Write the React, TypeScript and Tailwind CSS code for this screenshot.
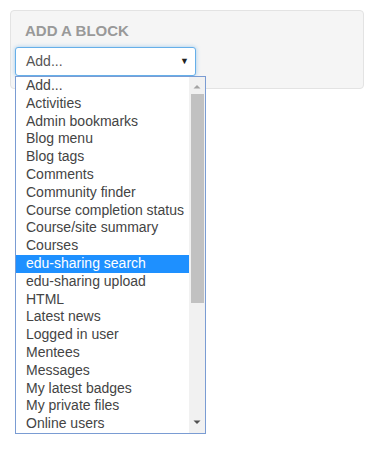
import React from "react";

const items = [
  "Add...",
  "Activities",
  "Admin bookmarks",
  "Blog menu",
  "Blog tags",
  "Comments",
  "Community finder",
  "Course completion status",
  "Course/site summary",
  "Courses",
  "edu-sharing search",
  "edu-sharing upload",
  "HTML",
  "Latest news",
  "Logged in user",
  "Mentees",
  "Messages",
  "My latest badges",
  "My private files",
  "Online users",
];

export default function App() {
  return (
    <div
      className="w-[373px] h-[459px] bg-white pt-[10px] pl-[10px]"
      style={{ fontFamily: '"Liberation Sans", Arial, sans-serif' }}
    >
      <div className="relative w-[354px] h-[79px] rounded-[4px] border border-[#e3e3e3] bg-[#f5f5f5] px-[4px]">
        <h2 className="pl-[10px] pt-[11px] text-[15px] leading-[18px] font-bold text-[#999999]">
          ADD A BLOCK
        </h2>
        {/* select box */}
        <div className="mt-[7px] flex h-[29px] w-[181px] items-center justify-between rounded-[3px] border border-[#66afe9] bg-white pl-[10px] pr-[6px] text-[14px] text-[#555555] shadow-[0_0_4px_rgba(102,175,233,0.6)]">
          <span>Add...</span>
          <span className="text-[9px] text-[#222]">▼</span>
        </div>

        {/* open list */}
        <div className="absolute left-[4px] top-[65px] flex h-[358px] w-[191px] overflow-hidden border border-[#7a9cd3] bg-white">
          <ul className="flex-1 text-[14px] text-[#444444]">
            {items.map((it) => (
              <li
                key={it}
                className={
                  it === "edu-sharing search"
                    ? "h-[17.8px] pl-[10px] leading-[17.8px] bg-[#1e90ff] text-white whitespace-nowrap"
                    : "h-[17.8px] pl-[10px] leading-[17.8px] whitespace-nowrap"
                }
              >
                {it}
              </li>
            ))}
          </ul>
          {/* scrollbar */}
          <div className="relative w-[16px] shrink-0 bg-[#f1f1f1]">
            <svg className="absolute left-[4px] top-[7px]" width="8" height="5" viewBox="0 0 8 5">
              <path d="M0.5 4.5 L4 1 L7.5 4.5 Z" fill="#a3a3a3" />
            </svg>
            <div className="absolute left-[2px] top-[17px] h-[209px] w-[13px] bg-[#c1c1c1]" />
            <svg className="absolute left-[4px] bottom-[8px]" width="8" height="5" viewBox="0 0 8 5">
              <path d="M0.5 0.5 L7.5 0.5 L4 4 Z" fill="#505050" />
            </svg>
          </div>
        </div>
      </div>
    </div>
  );
}
